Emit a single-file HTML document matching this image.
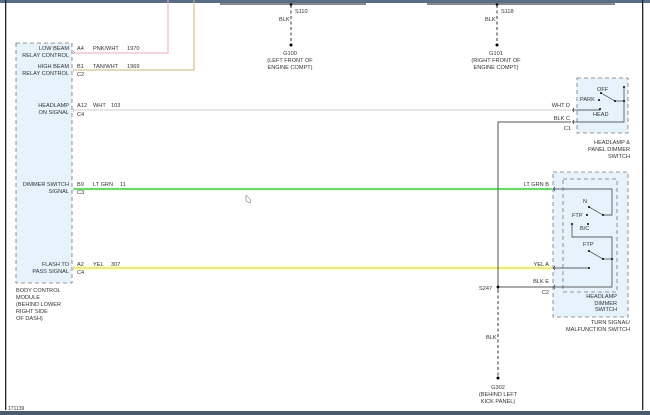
<!DOCTYPE html>
<html><head><style>
html,body{margin:0;padding:0;background:#fff;}
svg{display:block;font-family:"Liberation Sans",Arial,sans-serif;}
text{font-size:5.6px;fill:#333;}
</style></head><body>
<svg width="650" height="415" viewBox="0 0 650 415" xmlns="http://www.w3.org/2000/svg">
<rect x="0" y="0" width="650" height="3" fill="#5a6d88"/>
<rect x="220" y="3" width="146" height="2" fill="#888"/>
<rect x="427" y="3" width="188" height="2" fill="#888"/>
<rect x="5" y="0" width="1.3" height="410" fill="#222"/>
<rect x="642" y="0" width="1.3" height="410" fill="#222"/>
<rect x="0" y="411" width="650" height="4" fill="#4a5a70"/>
<text x="8" y="410" style="font-size:5px">171139</text>

<rect x="16" y="43" width="56" height="240" fill="#e6f3fc" stroke="#777" stroke-dasharray="4,3" stroke-width="0.8"/>
<g text-anchor="end">
<text x="69" y="50">LOW BEAM</text><text x="69" y="57">RELAY CONTROL</text>
<text x="69" y="68">HIGH BEAM</text><text x="69" y="75">RELAY CONTROL</text>
<text x="69" y="107">HEADLAMP</text><text x="69" y="114">ON SIGNAL</text>
<text x="69" y="186">DIMMER SWITCH</text><text x="69" y="193">SIGNAL</text>
<text x="69" y="266">FLASH TO</text><text x="69" y="273">PASS SIGNAL</text>
</g>
<g stroke="#444" stroke-width="0.5" fill="none">
<path d="M73,51 l1.5,1.5 l-1.5,1.5"/><path d="M73,68.5 l1.5,1.5 l-1.5,1.5"/>
<path d="M73,108.5 l1.5,1.5 l-1.5,1.5"/><path d="M73,187.5 l1.5,1.5 l-1.5,1.5"/>
<path d="M73,266.5 l1.5,1.5 l-1.5,1.5"/>
</g>
<g>
<text x="16" y="292">BODY CONTROL</text><text x="16" y="299">MODULE</text><text x="16" y="306">(BEHIND LOWER</text><text x="16" y="313">RIGHT SIDE</text><text x="16" y="320">OF DASH)</text>
</g>
<g>
<text x="77" y="50">A4</text><text x="77" y="68">B1</text><text x="77" y="76">C2</text>
<text x="77" y="107">A12</text><text x="77" y="116">C4</text>
<text x="77" y="186">B9</text><text x="77" y="194">C3</text>
<text x="77" y="266">A2</text><text x="77" y="274">C4</text>
<text x="93" y="50">PNK/WHT</text><text x="127" y="50">1970</text>
<text x="93" y="68">TAN/WHT</text><text x="127" y="68">1969</text>
<text x="93" y="107">WHT</text><text x="111" y="107">103</text>
<text x="93" y="186">LT GRN</text><text x="120" y="186">11</text>
<text x="93" y="266">YEL</text><text x="111" y="266">307</text>
</g>
<polyline points="74,53 168,53 168,0" fill="none" stroke="#f4a8b8" stroke-width="1"/>
<polyline points="74,70 194,70 194,0" fill="none" stroke="#c8b870" stroke-width="1"/>
<line x1="74" y1="110" x2="571" y2="110" stroke="#ccc" stroke-width="1"/>
<line x1="74" y1="189" x2="552" y2="189" stroke="#22dd22" stroke-width="1.4"/>
<line x1="74" y1="268" x2="552" y2="268" stroke="#f0f000" stroke-width="1.6"/>

<g stroke="#222" stroke-width="0.9" stroke-dasharray="3,2.5">
<line x1="291" y1="5" x2="291" y2="45"/><line x1="497" y1="5" x2="497" y2="45"/>
<line x1="498" y1="290" x2="498" y2="376"/>
</g>
<circle cx="291" cy="4.5" r="1.3" fill="#000"/><circle cx="497" cy="4.5" r="1.3" fill="#000"/>
<circle cx="291" cy="45" r="1.5" fill="#000"/><circle cx="497" cy="45" r="1.5" fill="#000"/>
<circle cx="498" cy="378" r="1.5" fill="#000"/>
<text x="295" y="13">S110</text><text x="279" y="21">BLK</text>
<text x="501" y="13">S118</text><text x="485" y="21">BLK</text>
<text x="486" y="339">BLK</text>
<g text-anchor="middle">
<text x="290" y="55">G100</text><text x="290" y="62">(LEFT FRONT OF</text><text x="290" y="69">ENGINE COMPT)</text>
<text x="496" y="55">G101</text><text x="496" y="62">(RIGHT FRONT OF</text><text x="496" y="69">ENGINE COMPT)</text>
<text x="498" y="389">G302</text><text x="498" y="396">(BEHIND LEFT</text><text x="498" y="403">KICK PANEL)</text>
</g>

<polyline points="571,122 498,122 498,290" fill="none" stroke="#555" stroke-width="1"/>
<line x1="498" y1="287" x2="553" y2="287" stroke="#777" stroke-width="1.2"/>
<circle cx="498" cy="287" r="1.4" fill="#000"/>
<text x="479" y="290">S247</text>

<rect x="577" y="78" width="51" height="55" fill="#e6f3fc" stroke="#777" stroke-dasharray="4,3" stroke-width="0.8"/>
<g text-anchor="end">
<text x="570" y="107">WHT D</text><text x="570" y="120">BLK C</text><text x="571" y="130">C1</text>
<text x="630" y="144">HEADLAMP &amp;</text><text x="630" y="151">PANEL DIMMER</text><text x="630" y="158">SWITCH</text>
</g>
<text x="597" y="91">OFF</text><text x="580" y="101">PARK</text><text x="593" y="116">HEAD</text>
<g stroke="#333" stroke-width="0.7" fill="none">
<polyline points="573,110 600,110 600,109"/>
<polyline points="573,122 624,122 624,87"/>
<line x1="601" y1="93" x2="615" y2="101"/><line x1="615" y1="101" x2="624" y2="101"/>
<path d="M574,108 l-1.5,2 l1.5,2"/><path d="M574,120 l-1.5,2 l1.5,2"/>
</g>
<g fill="#000"><circle cx="600" cy="109" r="1"/><circle cx="599" cy="100" r="1"/><circle cx="601" cy="93" r="1"/><circle cx="615" cy="101" r="1"/><circle cx="624" cy="101" r="1"/><circle cx="624" cy="87" r="1"/></g>

<rect x="553" y="172" width="75" height="145" fill="#e6f3fc" stroke="#777" stroke-dasharray="4,3" stroke-width="0.8"/>
<rect x="563" y="179" width="54" height="113" fill="none" stroke="#777" stroke-dasharray="4,3" stroke-width="0.8"/>
<g text-anchor="end">
<text x="549" y="186">LT GRN B</text><text x="549" y="266">YEL A</text><text x="549" y="283">BLK E</text><text x="549" y="294">C2</text>
<text x="617" y="298">HEADLAMP</text><text x="617" y="305">DIMMER</text><text x="617" y="311">SWITCH</text>
<text x="630" y="324">TURN SIGNAL/</text><text x="630" y="331">MALFUNCTION SWITCH</text>
</g>
<text x="583" y="203">N</text><text x="572" y="217">FTP</text><text x="580" y="230">B/C</text><text x="583" y="246">FTP</text>
<g stroke="#333" stroke-width="0.7" fill="none">
<polyline points="554,189 612,189 612,215 603,215"/>
<line x1="589" y1="207" x2="603" y2="215"/>
<polyline points="572,224 572,237 612,237 612,259"/>
<line x1="589" y1="251" x2="603" y2="259"/><line x1="603" y1="259" x2="612" y2="259"/>
<line x1="554" y1="268" x2="589" y2="268"/>
<polyline points="554,287 612,287 612,259"/>
<path d="M555,187 l-1.5,2 l1.5,2"/><path d="M555,266 l-1.5,2 l1.5,2"/><path d="M555,285 l-1.5,2 l1.5,2"/>
</g>
<g fill="#000"><circle cx="589" cy="207" r="1"/><circle cx="603" cy="215" r="1"/><circle cx="587" cy="215" r="1"/><circle cx="588" cy="224" r="1"/><circle cx="572" cy="224" r="1"/><circle cx="589" cy="251" r="1"/><circle cx="603" cy="259" r="1"/><circle cx="612" cy="259" r="1"/><circle cx="589" cy="268" r="1"/></g>
<path d="M246,195 l0,6 l4,2 l1,-3 z" fill="#fff" stroke="#555" stroke-width="0.5"/>
</svg>
</body></html>
